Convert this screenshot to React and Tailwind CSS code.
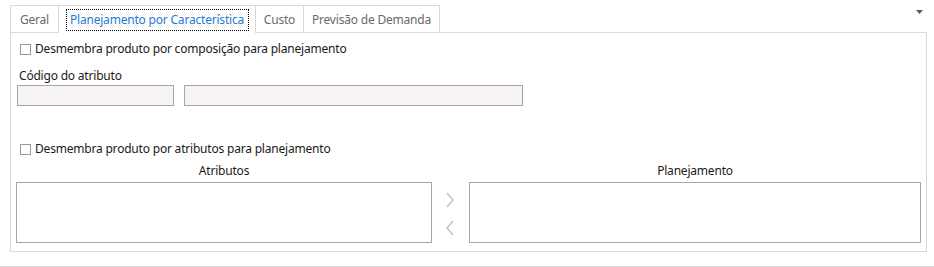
import React from "react";

const font = { fontFamily: '"Noto Sans", "Open Sans", sans-serif' };

function Check({ label }) {
  return (
    <label className="flex items-center h-4 ml-[9px] text-[12px] tracking-[-0.2px] text-[#1a1a1a]">
      <span className="w-[11px] h-[11px] border border-[#9a9a9a] bg-white shrink-0" />
      <span className="ml-[4px] leading-4 whitespace-nowrap">{label}</span>
    </label>
  );
}

function Chevron({ dir }) {
  return (
    <svg width="10" height="16" viewBox="0 0 10 16" fill="none">
      <path
        d={dir === "right" ? "M2 1 L8 8 L2 15" : "M8 1 L2 8 L8 15"}
        stroke="#c4c4c4"
        strokeWidth="1.6"
      />
    </svg>
  );
}

export default function App() {
  const tabs = [
    { name: "Geral", w: "w-[49px]" },
    { name: "Planejamento por Característica", w: "w-[198px]", active: true },
    { name: "Custo", w: "w-[49px]" },
    { name: "Previsão de Demanda", w: "w-[137px]" },
  ];

  return (
    <div className="w-[934px] h-[267px] bg-white relative" style={font}>
      {/* tab strip */}
      <div className="flex items-end pl-[10px] pt-[5px] h-[33px] relative z-10">
        {tabs.map((t, i) => (
          <div
            key={t.name}
            className={
              (i > 0 ? "-ml-px " : "") +
              t.w +
              (t.active
                ? " h-[28px] bg-white border border-b-0 border-[#d9d9d9] text-[#1e7bd3] flex items-center justify-center"
                : " h-[27px] mb-px bg-white border border-b-0 border-[#d9d9d9] text-[#6a6a6a] flex items-center justify-center pt-[1px]")
            }
          >
            {t.active ? (
              <span className="text-[12px] tracking-[-0.2px] whitespace-nowrap border border-dotted border-black h-[22px] flex items-center w-[183px] justify-center">
                {t.name}
              </span>
            ) : (
              <span className="text-[12px] tracking-[-0.2px] whitespace-nowrap">{t.name}</span>
            )}
          </div>
        ))}
        <div className="flex-1" />
        <svg width="8" height="6" viewBox="0 0 8 6" className="self-start mt-[5px] mr-[10px]">
          <path d="M0 0 H7 L3.5 4 Z" fill="#5a5a5a" />
        </svg>
      </div>

      {/* panel */}
      <div className="ml-[10px] w-[917px] h-[220px] -mt-px border border-[#d9d9d9] flex flex-col">
        <div className="mt-[8px]">
          <Check label="Desmembra produto por composição para planejamento" />
        </div>
        <div className="mt-[11px] ml-[8px] text-[12px] tracking-[-0.2px] leading-4 text-[#1a1a1a]">Código do atributo</div>
        <div className="mt-[1px] ml-[6px] flex gap-[10px]">
          <div className="w-[157px] h-[21px] border border-[#a6a6a6] bg-[#f6f2f6]" />
          <div className="w-[339px] h-[21px] border border-[#a6a6a6] bg-[#f6f2f6]" />
        </div>
        <div className="mt-[35px]">
          <Check label="Desmembra produto por atributos para planejamento" />
        </div>
        <div className="ml-[5px] flex">
          <div className="w-[416px] flex flex-col">
            <div className="mt-[6px] text-center text-[12px] tracking-[-0.2px] leading-4 text-[#1a1a1a]">Atributos</div>
            <div className="mt-[3px] h-[61px] border border-[#a6a6a6] bg-white" />
          </div>
          <div className="w-[37px] flex flex-col items-center justify-center pt-[28px] gap-[12px] pr-[1px]">
            <Chevron dir="right" />
            <Chevron dir="left" />
          </div>
          <div className="w-[452px] flex flex-col">
            <div className="mt-[6px] text-center text-[12px] tracking-[-0.2px] leading-4 text-[#1a1a1a]">Planejamento</div>
            <div className="mt-[3px] h-[61px] border border-[#a6a6a6] bg-white" />
          </div>
        </div>
      </div>

      {/* bottom line */}
      <div className="mt-[14px] h-px bg-[#d9d9d9]" />
    </div>
  );
}
